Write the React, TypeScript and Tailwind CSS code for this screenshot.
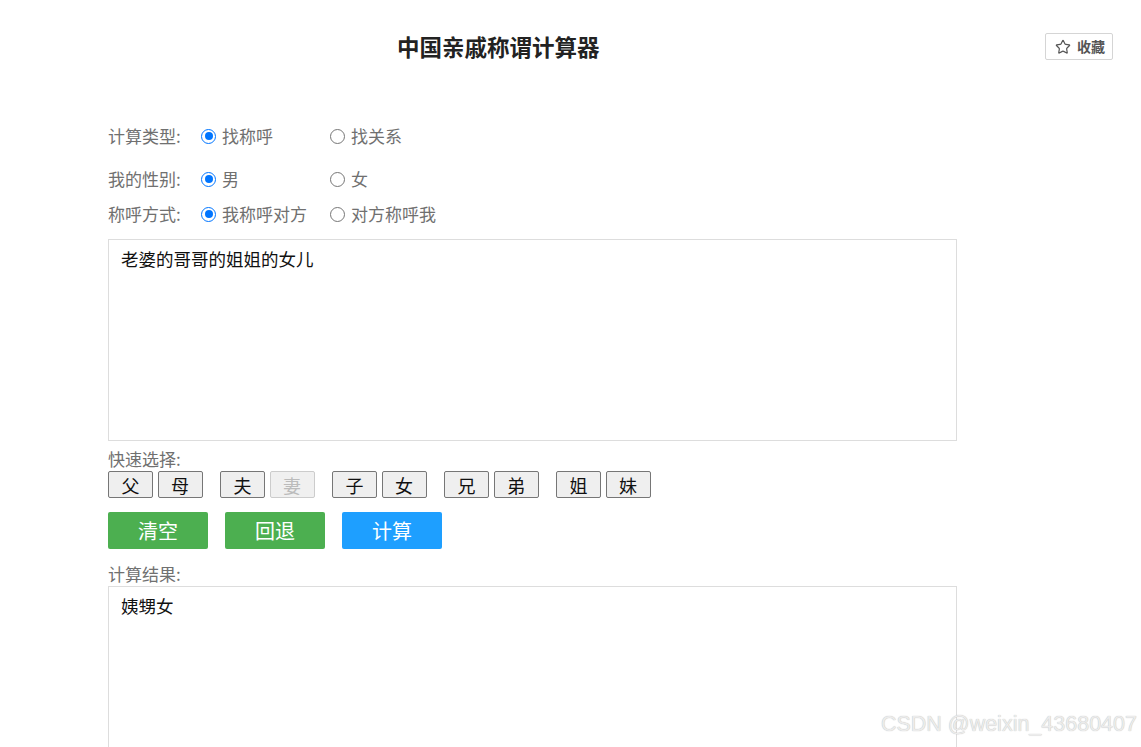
import { Star } from "lucide-react";

const groups = [
  ["父", "母"],
  ["夫", "妻"],
  ["子", "女"],
  ["兄", "弟"],
  ["姐", "妹"],
];

const font = { fontFamily: '"Noto Sans CJK SC", "Noto Sans", sans-serif' };

function Radio({ checked, label }: { checked?: boolean; label: string }) {
  return (
    <label className="flex items-center gap-[6px] w-[129px] shrink-0">
      {checked ? (
        <span className="w-[15px] h-[15px] rounded-full border-[1.5px] border-[#0075ff] flex items-center justify-center">
          <span className="w-[8px] h-[8px] rounded-full bg-[#0075ff]" />
        </span>
      ) : (
        <span className="w-[15px] h-[15px] rounded-full border-[1.5px] border-[#767676]" />
      )}
      <span>{label}</span>
    </label>
  );
}

function Row({ title, a, b }: { title: string; a: string; b: string }) {
  return (
    <div className="flex items-center h-[24px]">
      <span className="w-[93px] shrink-0">{title}</span>
      <Radio label={a} checked />
      <Radio label={b} />
    </div>
  );
}

export default function App() {
  return (
    <div className="relative w-[1141px] h-[747px] overflow-hidden bg-white text-[#707070] text-[17px]" style={font}>
      <div className="flex items-start pt-[30px]">
        <h1 className="ml-[397px] mt-[1px] text-[22.5px] font-bold text-[#222] leading-[30px]">中国亲戚称谓计算器</h1>
        <button className="ml-auto mr-[28px] mt-[3px] flex items-center gap-[6px] h-[27px] pl-[9px] pr-[7px] border border-[#d5d5d5] rounded-[2px] text-[14px] font-bold text-[#555] bg-white">
          <Star size={16} strokeWidth={1.8} />
          收藏
        </button>
      </div>

      <div className="ml-[108px] w-[849px] mt-[63px]">
        <div className="flex flex-col">
          <Row title="计算类型:" a="找称呼" b="找关系" />
          <div className="h-[19px]" />
          <Row title="我的性别:" a="男" b="女" />
          <div className="h-[11px]" />
          <Row title="称呼方式:" a="我称呼对方" b="对方称呼我" />
        </div>

        <div className="mt-[13px] h-[202px] border border-[#ddd] px-[12px] py-[6px] text-[17.5px] text-[#111] leading-[26px]">
          老婆的哥哥的姐姐的女儿
        </div>

        <div className="mt-[8px] leading-[20px]">快速选择:</div>
        <div className="flex gap-[17.5px] mt-[2px]">
          {groups.map((g, i) => (
            <div key={i} className="flex gap-[4.5px]">
              {g.map((c) => (
                <button
                  key={c}
                  disabled={c === "妻"}
                  className={
                    c === "妻"
                      ? "w-[45px] h-[27px] border border-[#ccc] rounded-[2px] bg-[#f0f0f0] text-[#bbb] text-[18px] leading-none"
                      : "w-[45px] h-[27px] border border-[#767676] rounded-[2px] bg-[#efefef] text-[#111] text-[18px] leading-none"
                  }
                >
                  {c}
                </button>
              ))}
            </div>
          ))}
        </div>

        <div className="flex gap-[17px] mt-[14px]">
          <button className="w-[100px] h-[37px] rounded-[2px] bg-[#4caf50] text-white text-[20px]">清空</button>
          <button className="w-[100px] h-[37px] rounded-[2px] bg-[#4caf50] text-white text-[20px]">回退</button>
          <button className="w-[100px] h-[37px] rounded-[2px] bg-[#1e9fff] text-white text-[20px]">计算</button>
        </div>

        <div className="mt-[13px] leading-[24px]">计算结果:</div>
        <div className="h-[200px] border border-[#ddd] px-[12px] py-[6px] text-[17.5px] text-[#111] leading-[26px]">
          姨甥女
        </div>
      </div>

      <div
        className="absolute right-[4px] bottom-[7px] text-[21.5px] text-[#ececec]"
        style={{ fontFamily: '"Liberation Sans", Arial, sans-serif', textShadow: "0 0 1px #b0b0b0" }}
      >
        CSDN @weixin_43680407
      </div>
    </div>
  );
}
